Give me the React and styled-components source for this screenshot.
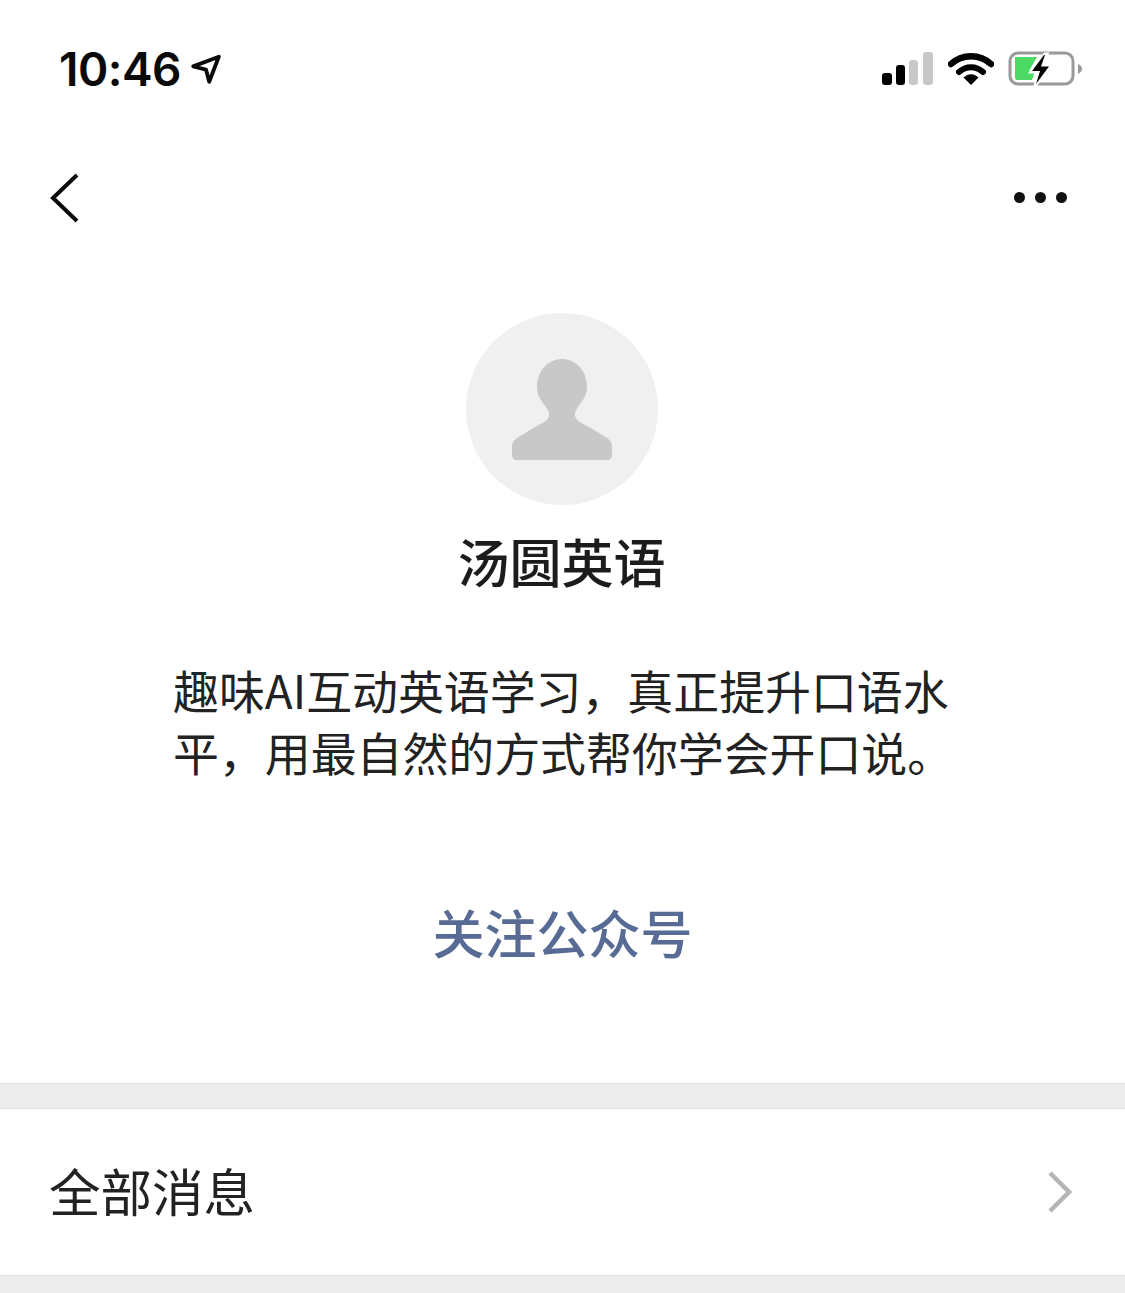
import React from "react";
import styled, { createGlobalStyle } from "styled-components";

const GlobalStyle = createGlobalStyle`
  html, body {
    margin: 0;
    padding: 0;
    background: #fff;
  }
`;

const cjk = `"Noto Sans CJK SC", "Noto Sans", sans-serif`;

function LocationArrow() {
  return (
    <svg width="32" height="32" viewBox="0 0 30 30">
      <path d="M3 12.5 L27 3.5 L18 27 L15 15.500 Z" fill="none" stroke="#0a0a0a" strokeWidth="3.600" strokeLinejoin="round" />
    </svg>
  );
}

function SignalBars() {
  return (
    <svg width="52" height="34" viewBox="0 0 52 34">
      <rect x="0" y="21" width="10" height="12" rx="3" fill="#000" />
      <rect x="14" y="13" width="9" height="20" rx="3" fill="#000" />
      <rect x="27" y="8" width="9" height="25" rx="3" fill="#c8c8c8" />
      <rect x="41" y="0" width="10" height="33" rx="3" fill="#c8c8c8" />
    </svg>
  );
}

function Wifi() {
  return (
    <svg width="46" height="34" viewBox="0 0 46 34">
      <path d="M3 12 C14 1.500 32 1.500 43 12" fill="none" stroke="#000" strokeWidth="6.500" strokeLinecap="round" />
      <path d="M11 20 C18 13.500 28 13.500 35 20" fill="none" stroke="#000" strokeWidth="6" strokeLinecap="round" />
      <path d="M15.500 25.500 C20 21 26 21 30.500 25.500 L23 33 Z" fill="#000" />
    </svg>
  );
}

function Battery() {
  return (
    <svg width="76" height="36" viewBox="0 0 76 36">
      <rect x="2" y="2" width="63" height="31" rx="8" fill="none" stroke="#9a9a9a" strokeWidth="3" />
      <path d="M7 6 H29 L21 20 H27 L24 29 H9 Q7 29 7 27 Z" fill="#4cd964" />
      <path d="M70 13 C73 14 74 16 74 18 C74 20 73 21 70 23 Z" fill="#9a9a9a" />
      <path d="M37 3 L23 21 H31 L27 35 L42 15 H34 L39 3 Z" fill="#fff" stroke="#fff" strokeWidth="3" />
      <path d="M36 4 L24 20 H32 L28 33 L41 15.500 H33 L37 4 Z" fill="#000" />
    </svg>
  );
}

function Silhouette() {
  return (
    <svg width="102" height="102" viewBox="0 0 102 102">
      <path
        d="M51 0 C63 0 76 10 76 28 C76 41 66 46 64 54 C63 60 68 63 78 68 L96 79 C100 82 101 84 101 89 L101 96 C101 99 99 101 96 101 L6 101 C3 101 1 99 1 96 L1 89 C1 84 2 82 6 79 L24 68 C34 63 39 60 38 54 C36 46 26 41 26 28 C26 10 39 0 51 0 Z"
        fill="#c8c8c8"
      />
    </svg>
  );
}

export default function App() {
  return (
    <Page>
      <GlobalStyle />
      <StatusBar>
        <Clock>
          <Time>10:46</Time>
          <LocationArrow />
        </Clock>
        <StatusIcons>
          <SignalBars />
          <Wifi />
          <Battery />
        </StatusIcons>
      </StatusBar>

      <NavBar>
        <svg width="30" height="50" viewBox="0 0 30 50">
          <path d="M27 2 L3 25 L27 48" fill="none" stroke="#0a0a0a" strokeWidth="4" />
        </svg>
        <MoreDots>
          <Dot />
          <Dot />
          <Dot />
        </MoreDots>
      </NavBar>

      <Profile>
        <Avatar>
          <Silhouette />
        </Avatar>
        <Name>汤圆英语</Name>
        <Intro>趣味AI互动英语学习，真正提升口语水平，用最自然的方式帮你学会开口说。</Intro>
        <FollowLink>关注公众号</FollowLink>
      </Profile>

      <Gap />
      <MessagesRow>
        <RowLabel>全部消息</RowLabel>
        <svg width="24" height="42" viewBox="0 0 24 42">
          <path d="M2 2 L21 21 L2 40" fill="none" stroke="#b4b4b4" strokeWidth="4.500" />
        </svg>
      </MessagesRow>
      <Gap />
    </Page>
  );
}

const Page = styled.div`
  width: 1125px;
  height: 1293px;
  overflow: hidden;
  background: #fff;
  font-family: ${cjk};
  color: #1a1a1a;
`;

const StatusBar = styled.div`
  height: 138px;
  box-sizing: border-box;
  padding: 45px 41px 0 59px;
  display: flex;
  justify-content: space-between;
  align-items: flex-start;
`;

const Clock = styled.div`
  display: flex;
  align-items: center;
  gap: 9px;
  height: 48px;
`;

const Time = styled.span`
  font-family: Inter, "Liberation Sans", sans-serif;
  font-size: 46px;
  font-weight: 600;
  line-height: 48px;
  letter-spacing: -0.5px;
  color: #0a0a0a;
`;

const StatusIcons = styled.div`
  display: flex;
  align-items: center;
  gap: 14px;
  margin-top: 6px;
`;

const NavBar = styled.div`
  height: 120px;
  box-sizing: border-box;
  padding: 35px 58px 0 50px;
  display: flex;
  justify-content: space-between;
  align-items: flex-start;
`;

const MoreDots = styled.div`
  display: flex;
  gap: 10px;
  margin-top: 19px;
`;

const Dot = styled.span`
  width: 11px;
  height: 11px;
  border-radius: 50%;
  background: #111;
`;

const Profile = styled.div`
  height: 825px;
  box-sizing: border-box;
  padding-top: 55px;
  display: flex;
  flex-direction: column;
  align-items: center;
`;

const Avatar = styled.div`
  width: 192px;
  height: 192px;
  box-sizing: border-box;
  padding-top: 2px;
  border-radius: 50%;
  background: #f0f0f0;
  display: flex;
  align-items: center;
  justify-content: center;
  margin-right: 2px;
`;

const Name = styled.div`
  margin-top: 26px;
  margin-right: 2px;
  font-size: 52px;
  line-height: 60px;
  font-weight: 500;
  color: #1c1c1c;
`;

const Intro = styled.p`
  margin: 67px 0 0 173px;
  align-self: flex-start;
  width: 782px;
  font-size: 45.9px;
  line-height: 62px;
  color: #222;
`;

const FollowLink = styled.div`
  margin-top: 120px;
  font-size: 52px;
  line-height: 60px;
  font-weight: 500;
  color: #576b95;
`;

const Gap = styled.div`
  height: 24px;
  background: #ececec;
  border-top: 1px solid #e4e4e4;
  border-bottom: 1px solid #e4e4e4;
`;

const MessagesRow = styled.div`
  height: 166px;
  box-sizing: border-box;
  padding: 0 53px 0 49px;
  display: flex;
  justify-content: space-between;
  align-items: center;
`;

const RowLabel = styled.span`
  font-size: 51.5px;
  line-height: 60px;
  padding-bottom: 5px;
  color: #222;
`;
